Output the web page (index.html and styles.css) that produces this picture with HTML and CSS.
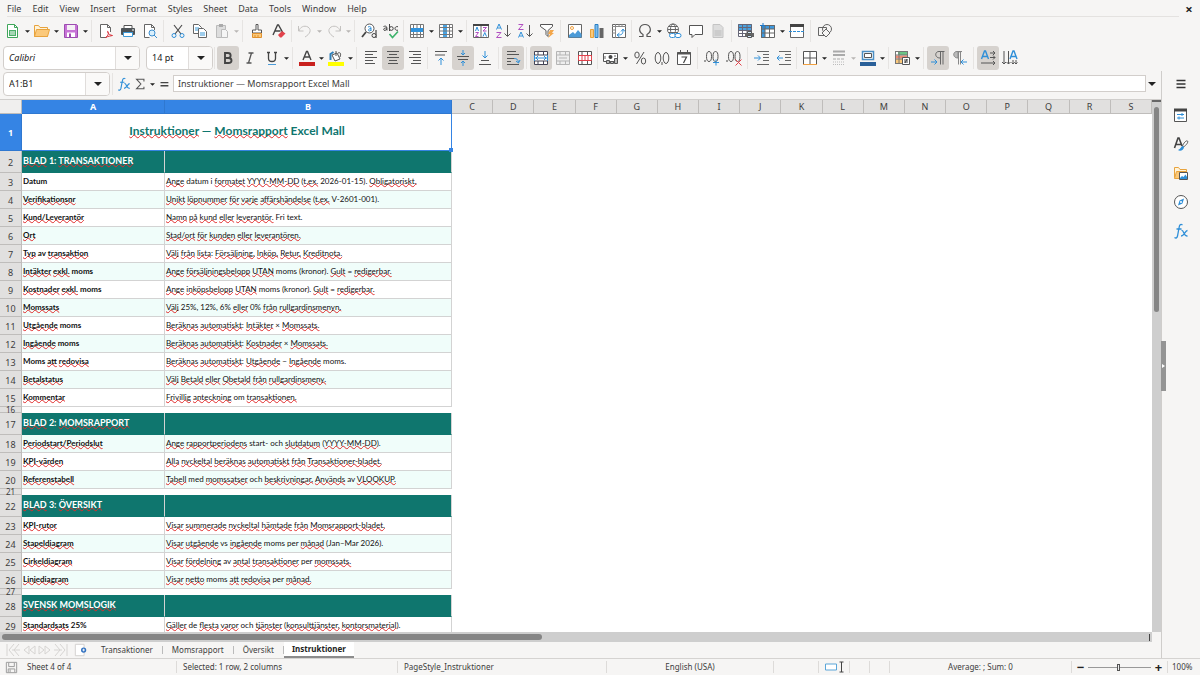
FILE: index.html
```html
<!DOCTYPE html>
<html lang="en">
<head>
<meta charset="utf-8">
<title>Momsrapport Excel Mall</title>
<link rel="stylesheet" href="styles.css">
</head>
<body>
<svg class="sprite" aria-hidden="true">
  <symbol id="new" viewBox="0 0 16 16"><path d="M2.500 1.500h7l3 3v10h-10z" fill="#fff" stroke="#3fa65a"/><path d="M9.500 1.500v3h3" fill="none" stroke="#3fa65a"/><path d="M4 7h7v6H4z" fill="#4caf6a"/><path d="M5 9h5M5 11h5" stroke="#fff"/></symbol>
  <symbol id="open" viewBox="0 0 16 16"><path d="M.5 13.500v-11h4l1.500 2h7.500v9z" fill="#fff3d8" stroke="#e8a33d"/><path d="M.5 13.500l2-7h13l-2 7z" fill="#fbc97b" stroke="#e8a33d"/></symbol>
  <symbol id="save" viewBox="0 0 16 16"><path d="M1.500 1.500h12l1 1v12h-13z" fill="#c773d6" stroke="#9c4bb0"/><path d="M4 2h8v5H4z" fill="#f4f0f5"/><path d="M4 9.500h8V14H4z" fill="#fff"/><path d="M6 10.500h2V14H6z" fill="#9c4bb0"/></symbol>
  <symbol id="pdf" viewBox="0 0 16 16"><path d="M12.500 9V4.500l-3-3h-7v13h6" fill="#fff" stroke="#666"/><path d="M9.500 1.500v3h3" fill="none" stroke="#666"/><path d="M7.500 14.500c3-2 3.500-5 2.500-6s-1 3 4.500 4c-2 .5-4 .5-7 2" fill="none" stroke="#d9303a"/></symbol>
  <symbol id="print" viewBox="0 0 16 16"><path d="M4 5V2.500h8V5" fill="#fff" stroke="#555"/><rect x="1" y="5" width="14" height="7" rx="1" fill="#4d5357"/><path d="M3.500 9.500h9v4h-9z" fill="#fff" stroke="#3d9ad8"/><path d="M12 7h2" stroke="#fff"/></symbol>
  <symbol id="preview" viewBox="0 0 16 16"><path d="M12.500 7V4.500l-3-3h-7v13h5" fill="#fff" stroke="#666"/><path d="M9.500 1.500v3h3" fill="none" stroke="#666"/><circle cx="10" cy="10" r="3" fill="#d9effc" stroke="#3d8fcf"/><path d="M12 12l3 3" stroke="#3d8fcf"/></symbol>
  <symbol id="cut" viewBox="0 0 16 16"><path d="M4 2l7 9M12 2l-7 9" stroke="#4d4d4d" stroke-width="1.200"/><circle cx="4" cy="12.500" r="2" fill="none" stroke="#2f8fd8"/><circle cx="12" cy="12.500" r="2" fill="none" stroke="#2f8fd8"/></symbol>
  <symbol id="copy" viewBox="0 0 16 16"><path d="M1.500 1.500h5l3 3v6h-8z" fill="#fff" stroke="#666"/><path d="M6.500 5.500h5l3 3v6h-8z" fill="#fff" stroke="#666"/><path d="M3 5h4M3 7h3M8 10h5M8 12h5" stroke="#3d9ad8"/></symbol>
  <symbol id="paste" viewBox="0 0 16 16"><path d="M2.500 2.500h9v12h-9z" fill="#ddd" stroke="#bbb"/><path d="M5 1h4v3H5z" fill="#aaa"/><path d="M7.500 6.500h4l2 2v6h-6z" fill="#f5f5f5" stroke="#bbb"/></symbol>
  <symbol id="clone" viewBox="0 0 16 16"><path d="M7 1.500h2V7h3.500v3h-9V7H7z" fill="#fff" stroke="#555"/><path d="M3.500 10.500h9v4h-9z" fill="#fbc97b" stroke="#e0912e"/><path d="M6 12v2M9 12v2" stroke="#e0912e"/></symbol>
  <symbol id="clear" viewBox="0 0 16 16"><path d="M2 12L6.500 2h1L12 10M3.500 8h6" fill="none" stroke="#444" stroke-width="1.400"/><path d="M7 12l4-4 3.500 2.500-4 4H9z" fill="#e2434c"/></symbol>
  <symbol id="undo" viewBox="0 0 16 16"><path d="M1.500 3v5h5M2 8c1-4 5-6 9-4 4 3 2 7-3 10" fill="none" stroke="#c4c2c0"/></symbol>
  <symbol id="redo" viewBox="0 0 16 16"><path d="M14.500 3v5h-5M14 8c-1-4-5-6-9-4-4 3-2 7 3 10" fill="none" stroke="#c4c2c0"/></symbol>
  <symbol id="find" viewBox="0 0 16 16"><circle cx="8.500" cy="5.500" r="4.500" fill="#fff" stroke="#555"/><path d="M5 9l-4 5" stroke="#444" stroke-width="1.800"/><path d="M7 4c2-1 3 0 3 1v3M10 5.500c-3 0-3 2.500-1.500 2.500L10 7" fill="none" stroke="#2f8fd8"/><path d="M15 7v8" stroke="#444" stroke-width="1.200"/><circle cx="13" cy="12.500" r="2" fill="#f6f5f4" stroke="#444"/></symbol>
  <symbol id="spell" viewBox="0 0 16 16"><path d="M.5 3.500c3-1 3.500 0 3.500 4M4 5C0 4.500 0 7.500 2 7.500L4 6M6.500 1v7" fill="none" stroke="#444"/><circle cx="8.300" cy="5.500" r="1.900" fill="none" stroke="#444"/><path d="M15 3.700c-4-1-4 4.500 0 3.500" fill="none" stroke="#444"/><path d="M6.500 11l3 3.500L15 8.500" fill="none" stroke="#3db36b" stroke-width="1.600"/></symbol>
  <symbol id="rows" viewBox="0 0 16 16"><path d="M1.500 1.500h13v13h-13z" fill="#fff"/><path d="M1 5h14v4H1z" fill="#2f93dd"/><path d="M1.500 1.500h13v13h-13zM4.500 1v4M8 1v4M11.500 1v4M4.500 9v6M8 9v6M11.500 9v6M1 11.500h14" fill="none" stroke="#777"/></symbol>
  <symbol id="cols" viewBox="0 0 16 16"><path d="M1.500 1.500h13v13h-13z" fill="#fff"/><path d="M5 1h4v14H5z" fill="#4ba3e0"/><path d="M1.500 1.500h13v13h-13zM11.500 1v14M1 4.500h14M1 8h14M1 11.500h14" fill="none" stroke="#777"/></symbol>
  <symbol id="sort" viewBox="0 0 16 16"><path d="M.5 1.500h15v13H.5zM8 3v12" fill="#fff" stroke="#666"/><path d="M0 2h16" stroke="#444" stroke-width="2"/><path d="M2.500 8l1.500-4 1.500 4M10 13.500l1.800-4 1.700 4" fill="none" stroke="#2f8fd8"/><path d="M2.500 9.500h3l-3 4h3M10 4.500h3.500l-3.500 3.500h3.500" fill="none" stroke="#b04fc0"/></symbol>
  <symbol id="asc" viewBox="0 0 16 16"><path d="M1.500 6.500L4 1l2.500 5.500M2.500 5h3" fill="none" stroke="#2f8fd8"/><path d="M1.500 9.500h4.500l-4.500 5h5" fill="none" stroke="#b04fc0"/><path d="M12.500 2v11M9.500 10.500l3 3 3-3" fill="none" stroke="#555"/></symbol>
  <symbol id="desc" viewBox="0 0 16 16"><path d="M1.500 14.500L4 9l2.500 5.500M2.500 13h3" fill="none" stroke="#2f8fd8"/><path d="M1.500 1.500h4.500l-4.500 5h5" fill="none" stroke="#b04fc0"/><path d="M12.500 2v11M9.500 10.500l3 3 3-3" fill="none" stroke="#555"/></symbol>
  <symbol id="filter" viewBox="0 0 16 16"><path d="M1.500 1.500h12v2l-4.500 4v6l-2-2v-4l-5.500-4z" fill="#fff" stroke="#555"/><path d="M11 7h4l-2 3h2l-6 5 2-4H9z" fill="#f3a64a"/></symbol>
  <symbol id="image" viewBox="0 0 16 16"><path d="M1.500 1.500h13v13h-13z" fill="#fff" stroke="#666"/><circle cx="5" cy="5" r="1.500" fill="#fff" stroke="#f0a040"/><path d="M2 12l4-3 2 2 3-4 3.500 4v3.500H2z" fill="#4b9bd8"/></symbol>
  <symbol id="chart" viewBox="0 0 16 16"><path d="M1.500 6.500h3v8h-3z" fill="#fbc97b" stroke="#e8a33d"/><path d="M6 1.500h3v13H6z" fill="#7bbcec" stroke="#2b7fc4"/><path d="M10.500 5h4v10h-4z" fill="#666"/></symbol>
  <symbol id="pivot" viewBox="0 0 16 16"><path d="M1.500 1.500h13v13h-13z" fill="#fff" stroke="#666"/><path d="M1 3.500h14M4.500 1v14M8 1v3M11 1v3M1 7h4M1 10h4" stroke="#888"/><path d="M7 12c4 0 5-1 5-5M10 8.500L12 6l2 2.500M8.500 10L6 12l2.500 2" fill="none" stroke="#2f8fd8"/></symbol>
  <symbol id="omega" viewBox="0 0 16 16"><path d="M2 13.500h4v-2C0 8 3 1.500 8 1.500S16 8 10 11.500v2h4" fill="none" stroke="#555" stroke-width="1.200"/></symbol>
  <symbol id="link" viewBox="0 0 16 16"><circle cx="7" cy="6.500" r="5.500" fill="#fff" stroke="#666"/><ellipse cx="7" cy="6.500" rx="2.500" ry="5.500" fill="none" stroke="#666"/><path d="M1.500 6.500h11M2.500 3.500h9M2.500 9.500h9" stroke="#666"/><rect x="3.500" y="10.500" width="6" height="4" rx="2" fill="#fff" stroke="#2f8fd8"/><rect x="9" y="10.500" width="6" height="4" rx="2" fill="#fff" stroke="#2f8fd8"/></symbol>
  <symbol id="comment" viewBox="0 0 16 16"><path d="M1.500 2.500h13v9H7l-3 3v-3H1.500z" fill="#fff" stroke="#555"/></symbol>
  <symbol id="headers" viewBox="0 0 16 16"><path d="M3 1.500h7l3 3v10H3z" fill="#ddd" stroke="#c4c4c4"/><path d="M4.500 8h7M4.500 10h7M4.500 12h7" stroke="#bbb"/></symbol>
  <symbol id="printarea" viewBox="0 0 16 16"><path d="M.5 1.500h13v12H.5z" fill="#fff"/><path d="M0 1h14v7H0z" fill="#4ba3e0"/><path d="M.5 1.500h13v12H.5zM4.500 1v13M9 1v13M0 4.500h14M0 7.500h14M0 10.500h14" fill="none" stroke="#667"/><path d="M7 10h9v4H7z" fill="#666"/><path d="M9.500 8.500h4v2h-4zM9.500 12.500h4v2h-4z" fill="#cfe8fa" stroke="#555"/></symbol>
  <symbol id="freeze" viewBox="0 0 16 16"><path d="M1 2h14v13H1z" fill="#fff"/><path d="M1 2h14v4H5v9H1z" fill="#3d98de"/><path d="M1.500 2.500h13v12h-13zM5 2v13M9.500 2v13M1 6h14M1 10h14" fill="none" stroke="#666"/><path d="M3 0v5M0 2.500h5" stroke="#1f78c8"/></symbol>
  <symbol id="split" viewBox="0 0 16 16"><path d="M1.500 2.500h13v12h-13z" fill="#fff" stroke="#666"/><path d="M1 2.500h14" stroke="#444" stroke-width="3"/><path d="M0 8.500h16" stroke="#2f8fd8" stroke-dasharray="3 1"/></symbol>
  <symbol id="shapes" viewBox="0 0 16 16"><path d="M1.500 4.500h8v8h-8z" fill="#f6f5f4" stroke="#666"/><circle cx="10" cy="6" r="4.500" fill="none" stroke="#666"/><path d="M9 6l4 4-4 4-4-4z" fill="#f6f5f4" stroke="#666"/></symbol>

  <symbol id="bold" viewBox="0 0 16 16"><path d="M5 3v10h3.500c4 0 4-5 0-5H5h3c3.500 0 3.500-5 0-5z" fill="none" stroke="#444" stroke-width="1.900"/></symbol>
  <symbol id="italic" viewBox="0 0 16 16"><path d="M6.500 3h5M4.500 13h5M9.500 3l-3 10" fill="none" stroke="#555" stroke-width="1.300"/></symbol>
  <symbol id="underline" viewBox="0 0 16 16"><path d="M3 2.500h3M10 2.500h3M4.500 2.500v6c0 4 7 4 7 0v-6" fill="none" stroke="#444" stroke-width="1.300"/><path d="M4 14.500h8" stroke="#4b9bd8"/></symbol>
  <symbol id="fontcolor" viewBox="0 0 16 16"><path d="M4 10L7.500 1.500h1L12 10M5.500 7h5" fill="none" stroke="#444" stroke-width="1.400"/><path d="M0 12h16v4H0z" fill="#c9211e"/></symbol>
  <symbol id="fill" viewBox="0 0 16 16"><path d="M4 5l5-2 3 6-5 2zM8 1v5" fill="#fff" stroke="#555"/><path d="M2.500 10V4l3-2" fill="none" stroke="#2f7fb8" stroke-width="2"/><path d="M10 3c3-1 3 1 2 4" fill="none" stroke="#555"/><path d="M0 12h16v4H0z" fill="#ff0"/></symbol>
  <symbol id="left" viewBox="0 0 16 16"><path d="M2 1.500h12M2 4.500h8M2 7.500h12M2 10.500h8M2 13.500h10" stroke="#555"/></symbol>
  <symbol id="center" viewBox="0 0 16 16"><path d="M2 1.500h12M4 4.500h8M2 7.500h12M4 10.500h8M3 13.500h10" stroke="#555"/></symbol>
  <symbol id="right" viewBox="0 0 16 16"><path d="M2 1.500h12M6 4.500h8M2 7.500h12M6 10.500h8M4 13.500h10" stroke="#555"/></symbol>
  <symbol id="top" viewBox="0 0 16 16"><path d="M2 1.500h12M2 5h10" stroke="#555"/><path d="M8 15V8M5.500 10.500L8 8l2.500 2.500" fill="none" stroke="#2f8fd8"/></symbol>
  <symbol id="middle" viewBox="0 0 16 16"><path d="M2 6.500h12M3 9.500h10" stroke="#555"/><path d="M8 0v5M6 3l2 2 2-2M8 16v-5M6 13l2-2 2 2" fill="none" stroke="#2f8fd8"/></symbol>
  <symbol id="bottom" viewBox="0 0 16 16"><path d="M4 10.500h8M2 14.500h12" stroke="#555"/><path d="M8 1v7M5.500 5.500L8 8l2.500-2.500" fill="none" stroke="#2f8fd8"/></symbol>
  <symbol id="wrap" viewBox="0 0 16 16"><path d="M2 1.500h9M2 4.500h12M2 8.500h7M2 11.500h4M2 14.500h12" stroke="#555"/><path d="M9 8.500c3 0 4 1 4.500 4M11 11l2.500 2 1.500-3" fill="none" stroke="#2f8fd8"/></symbol>
  <symbol id="merge" viewBox="0 0 16 16"><path d="M1.500 1.500h13v13h-13z" fill="#fff"/><path d="M1.500 1.500h13v13h-13zM5 1v4M10.500 1v4M5 11v4M10.500 11v4M1 5h14M1 11h14" fill="none" stroke="#445"/><path d="M1.500 5v6M14.500 5v6M2 8h12M5 6L3 8l2 2M11 6l2 2-2 2" fill="none" stroke="#2f8fd8"/></symbol>
  <symbol id="mergeoff" viewBox="0 0 16 16"><path d="M1.500 1.500h13v13h-13zM5 1v4M10.500 1v4M5 11v4M10.500 11v4M1 5h14M1 11h14M4 8h8" fill="#eee" stroke="#b5b5b5"/></symbol>
  <symbol id="unmerge" viewBox="0 0 16 16"><path d="M1.500 1.500h13v13h-13zM5 1v4M10.500 1v4M5 11v4M10.500 11v4" fill="#fff" stroke="#555"/><path d="M1.500 5.500h13v5h-13zM5 5v6M8 5v6M11 5v6" fill="none" stroke="#e2434c"/></symbol>
  <symbol id="currency" viewBox="0 0 16 16"><path d="M.5 3.500h14v8H.5z" fill="#fff" stroke="#555"/><circle cx="7.500" cy="7" r="2" fill="#444"/><path d="M2 6v3M12 5v2" stroke="#666"/><path d="M3.500 10.500h3v3h-3zM7.500 11.500h3v2h-3zM11.500 8.500h3v5h-3z" fill="#bbb" stroke="#555"/></symbol>
  <symbol id="percent" viewBox="0 0 16 16"><ellipse cx="5" cy="5" rx="2.200" ry="3" fill="none" stroke="#555"/><ellipse cx="11.500" cy="11" rx="2.200" ry="3" fill="none" stroke="#555"/><path d="M12 2L4.500 14" stroke="#555"/></symbol>
  <symbol id="number" viewBox="0 0 16 16"><ellipse cx="4" cy="8" rx="2.800" ry="5.500" fill="none" stroke="#555"/><ellipse cx="12" cy="8" rx="2.800" ry="5.500" fill="none" stroke="#555"/><path d="M8 12v3" stroke="#555"/></symbol>
  <symbol id="date" viewBox="0 0 16 16"><path d="M1.500 2.500h13v12h-13z" fill="#fff" stroke="#555"/><path d="M1 3.500h14" stroke="#555" stroke-width="2"/><path d="M4.500 0v4M11.500 0v4" stroke="#555"/><path d="M5.500 7h5l-3 6" fill="none" stroke="#444" stroke-width="1.200"/></symbol>
  <symbol id="adddec" viewBox="0 0 16 16"><ellipse cx="5" cy="6.500" rx="2.500" ry="5" fill="none" stroke="#555"/><ellipse cx="11.500" cy="6.500" rx="2.500" ry="5" fill="none" stroke="#555"/><path d="M1 10v2" stroke="#444"/><path d="M9 12.500h6M12 9.500v6" stroke="#2f8fd8"/></symbol>
  <symbol id="deldec" viewBox="0 0 16 16"><ellipse cx="5" cy="6.500" rx="2.500" ry="5" fill="none" stroke="#555"/><ellipse cx="11.500" cy="6.500" rx="2.500" ry="5" fill="none" stroke="#555"/><path d="M1 10v2" stroke="#444"/><path d="M9.500 9.500l6 6M15.500 9.500l-6 6" stroke="#e2434c"/></symbol>
  <symbol id="indent" viewBox="0 0 16 16"><path d="M3 1.500h12M9 4.500h6M9 7.500h6M9 10.500h6M3 14.500h12" stroke="#666"/><path d="M0 8h6M4 5.500L6.500 8 4 10.500" fill="none" stroke="#2f8fd8"/></symbol>
  <symbol id="outdent" viewBox="0 0 16 16"><path d="M3 1.500h12M9 4.500h6M9 7.500h6M9 10.500h6M3 14.500h12" stroke="#666"/><path d="M1 8h6M3.500 5.500L1 8l2.500 2.500" fill="none" stroke="#2f8fd8"/></symbol>
  <symbol id="border" viewBox="0 0 16 16"><path d="M1.500 1.500h13v13h-13zM8 1v13M1 8h14" fill="#fff" stroke="#555"/><path d="M1 14.500h14" stroke="#f0a040"/></symbol>
  <symbol id="linestyle" viewBox="0 0 16 16"><path d="M2 1.500h12M2 5h12" stroke="#aaa" stroke-width="2"/><path d="M2 9h12" stroke="#aaa" stroke-dasharray="3 1"/><path d="M2 12h12M2 14.500h12" stroke="#bbb" stroke-dasharray="1 1"/></symbol>
  <symbol id="linecolor" viewBox="0 0 16 16"><path d="M2.500 1.500h11v8h-11z" fill="#fff" stroke="#4b8fc4" stroke-width="1.500"/><path d="M4.500 3.500h7v4h-7z" fill="#fff" stroke="#555"/><path d="M0 12h16v4H0z" fill="#2a6099"/></symbol>
  <symbol id="cond" viewBox="0 0 16 16"><path d="M.5 1.500h12v12H.5z" fill="#fff" stroke="#555"/><path d="M3 2h9v3H3z" fill="#6cc486"/><path d="M1 5.500h11v3H1z" fill="#f08b74"/><path d="M1 9h7v4H1z" fill="#fbc97b"/><path d="M.5 1.500h12v12H.5zM4 1v13M0 5h13M0 9h13" fill="none" stroke="#777"/><path d="M7.500 7.500h7v7h-7z" fill="#fff" stroke="#555"/><path d="M9 10h4M9 12h4M12 9l-2 4" stroke="#444"/></symbol>
  <symbol id="ltr" viewBox="0 0 16 16"><path d="M14.500 1.500H9c-4.500 0-4.500 6.500 1 6.500M10.500 1.500v13M13 1.500v13" fill="none" stroke="#666"/><path d="M1 12h6M4.500 9.500L7 12l-2.500 2.500" fill="none" stroke="#2f8fd8"/></symbol>
  <symbol id="rtl" viewBox="0 0 16 16"><path d="M10 1.500H5C.5 1.500.5 8 6 8V2zM6.500 1.500v13M8.500 1.500v13" fill="#bbb" stroke="#888"/><path d="M9 12h6M11.500 9.500L9 12l2.500 2.500" fill="none" stroke="#2f8fd8"/></symbol>
  <symbol id="txth" viewBox="0 0 16 16"><path d="M1.500 9L4.500 1h1l3 8M2.500 6.500h5" fill="none" stroke="#2f8fd8" stroke-width="1.400"/><path d="M10 3h5M10 7.500h5M1 13h14M13 1l2 2-2 2M13 5.500l2 2-2 2M13 11l2 2-2 2" fill="none" stroke="#555"/></symbol>
  <symbol id="txtv" viewBox="0 0 16 16"><path d="M8 9l3-8h1l3 8M9 6.500h5" fill="none" stroke="#2f8fd8" stroke-width="1.400"/><path d="M2 1v13M6.500 1v13M0 12l2 2 2-2M4.500 12l2 2 2-2M11 10v4M14 10v4M9.500 12.500l1.500 1.500 1.500-1.500 1.500 1.500 1.500-1.500" fill="none" stroke="#555"/></symbol>

  <symbol id="fx" viewBox="0 0 16 16"><path d="M9.500 2C7.500.5 6.500 2 6 5l-1.500 8c-.5 2-1.500 2.500-3 1.500M3.500 6h5" fill="none" stroke="#2f8fd8" stroke-width="1.300"/><path d="M8.500 7.500c2.500-1 2 6 6 5.500M14.500 7.500c-2.500 0-3 5.500-6.500 5.500" fill="none" stroke="#2f8fd8" stroke-width="1.300"/></symbol>
  <symbol id="sigma" viewBox="0 0 16 16"><path d="M12.500 5V2.500H4L9 8l-5 5.500h8.500V11" fill="none" stroke="#555" stroke-width="1.200"/></symbol>
  <symbol id="equal" viewBox="0 0 16 16"><path d="M4 6.500h9M4 10h9" stroke="#444" stroke-width="1.500"/></symbol>
  <symbol id="menu" viewBox="0 0 16 16"><path d="M3.500 4.500h9M3.500 8h9M3.500 11.500h9" stroke="#333" stroke-width="1.400"/></symbol>
  <symbol id="props" viewBox="0 0 16 16"><path d="M1.500 2.500h12v12h-12z" fill="#fff" stroke="#555"/><path d="M1 3h13" stroke="#444" stroke-width="3"/><path d="M4 7.500h7M4 11h7" stroke="#2f8fd8"/><path d="M9 6v3M6 9.500v3" stroke="#2f8fd8"/></symbol>
  <symbol id="styles" viewBox="0 0 16 16"><path d="M1.500 12L5 2h1l3 8M3 8.500h5" fill="none" stroke="#444" stroke-width="1.600"/><path d="M14.500 5c1 1-1 4-4 6l-1-1c1-3 4-6 5-5z" fill="#fff" stroke="#555"/><path d="M10 10c-2 0-2 3-5 4 2 2 6 0 6-3z" fill="#2f8fd8"/></symbol>
  <symbol id="gallery" viewBox="0 0 16 16"><path d="M1.500 12.500v-10h4l1.500 2h6.500v8z" fill="#fff3d8" stroke="#e8a33d"/><path d="M1.500 13.500l2-7h10v7z" fill="#fbc97b" stroke="#e8a33d"/><path d="M6.500 7.500h8v7h-8z" fill="#fff" stroke="#555"/><path d="M7 13l2-2 1.500 1 2-2.500L14 12v2H7z" fill="#2f8fd8"/></symbol>
  <symbol id="navigator" viewBox="0 0 16 16"><circle cx="8" cy="8" r="6.500" fill="#fff" stroke="#555"/><path d="M11 4.500L9.500 9.500 5 11.500 6.500 6.500z" fill="#2f8fd8"/><circle cx="8" cy="8" r="1" fill="#fff"/></symbol>
  <symbol id="first" viewBox="0 0 16 16"><path d="M2 2v12M14 2l-5 6 5 6M9 2L4 8l5 6M7 8h8" fill="none" stroke="#d6d4d2"/></symbol>
  <symbol id="prev" viewBox="0 0 16 16"><path d="M8 4L3 8l5 4zM14 4L9 8l5 4z" fill="none" stroke="#d6d4d2"/></symbol>
  <symbol id="addsheet" viewBox="0 0 16 16"><path d="M1.500 1.500h10v13h-10z" fill="#fff" stroke="#d0cecc"/><circle cx="11" cy="8" r="3" fill="#3271c0"/><path d="M9.500 8h3M11 6.500v3" stroke="#fff"/></symbol>
  <symbol id="disk" viewBox="0 0 16 16"><path d="M2.500 2.500h11v11h-11zM5 3v4h6V3M4.500 13V9.500h7V13M6.500 10v3" fill="none" stroke="#999"/></symbol>
  <symbol id="mode" viewBox="0 0 20 12"><path d="M.5 3h11v6H.5z" fill="#fff" stroke="#5aa5d8"/><path d="M14.500 1h4M14.500 11h4M16.500 1v10" stroke="#444"/></symbol>
  <symbol id="arrow" viewBox="0 0 8 4"><path d="M0 0h8L4 4z" fill="currentColor"/></symbol>
</svg>

<header class="menubar">
  <nav class="menus" aria-label="Main menu">
    <button>File</button><button>Edit</button><button>View</button><button>Insert</button><button>Format</button><button>Styles</button><button>Sheet</button><button>Data</button><button>Tools</button><button>Window</button><button>Help</button>
  </nav>
  <button class="close" aria-label="Close document">×</button>
</header>

<div class="toolbar" role="toolbar" aria-label="Standard">
  <button class="tool" aria-label="New"><svg><use href="#new"/></svg></button><button class="drop" aria-label="New options"><svg><use href="#arrow"/></svg></button>
  <button class="tool" aria-label="Open"><svg><use href="#open"/></svg></button><button class="drop" aria-label="Open options"><svg><use href="#arrow"/></svg></button>
  <button class="tool" aria-label="Save"><svg><use href="#save"/></svg></button><button class="drop" aria-label="Save options"><svg><use href="#arrow"/></svg></button>
  <span class="sep"></span>
  <button class="tool" aria-label="Export as PDF"><svg><use href="#pdf"/></svg></button>
  <button class="tool" aria-label="Print"><svg><use href="#print"/></svg></button>
  <button class="tool" aria-label="Print preview"><svg><use href="#preview"/></svg></button>
  <span class="sep"></span>
  <button class="tool" aria-label="Cut"><svg><use href="#cut"/></svg></button>
  <button class="tool" aria-label="Copy"><svg><use href="#copy"/></svg></button>
  <button class="tool" aria-label="Paste" disabled><svg><use href="#paste"/></svg></button><button class="drop" aria-label="Paste options" disabled><svg><use href="#arrow"/></svg></button>
  <span class="sep"></span>
  <button class="tool" aria-label="Clone formatting"><svg><use href="#clone"/></svg></button>
  <button class="tool" aria-label="Clear formatting"><svg><use href="#clear"/></svg></button>
  <span class="sep tight"></span>
  <button class="tool" aria-label="Undo" disabled><svg><use href="#undo"/></svg></button><button class="drop" aria-label="Undo options" disabled><svg><use href="#arrow"/></svg></button>
  <button class="tool" aria-label="Redo" disabled><svg><use href="#redo"/></svg></button><button class="drop" aria-label="Redo options" disabled><svg><use href="#arrow"/></svg></button>
  <span class="sep"></span>
  <button class="tool" aria-label="Find and replace"><svg><use href="#find"/></svg></button>
  <button class="tool" aria-label="Spelling"><svg><use href="#spell"/></svg></button>
  <span class="sep tight"></span>
  <button class="tool" aria-label="Row"><svg><use href="#rows"/></svg></button><button class="drop" aria-label="Row options"><svg><use href="#arrow"/></svg></button>
  <button class="tool" aria-label="Column"><svg><use href="#cols"/></svg></button><button class="drop" aria-label="Column options"><svg><use href="#arrow"/></svg></button>
  <span class="sep"></span>
  <button class="tool" aria-label="Sort"><svg><use href="#sort"/></svg></button>
  <button class="tool" aria-label="Sort ascending"><svg><use href="#asc"/></svg></button>
  <button class="tool" aria-label="Sort descending"><svg><use href="#desc"/></svg></button>
  <button class="tool" aria-label="AutoFilter"><svg><use href="#filter"/></svg></button>
  <span class="sep"></span>
  <button class="tool" aria-label="Insert image"><svg><use href="#image"/></svg></button>
  <button class="tool" aria-label="Insert chart"><svg><use href="#chart"/></svg></button>
  <button class="tool" aria-label="Pivot table"><svg><use href="#pivot"/></svg></button>
  <span class="sep tight"></span>
  <button class="tool" aria-label="Special character"><svg><use href="#omega"/></svg></button><button class="drop" aria-label="Special character options"><svg><use href="#arrow"/></svg></button>
  <button class="tool" aria-label="Hyperlink"><svg><use href="#link"/></svg></button>
  <button class="tool" aria-label="Comment"><svg><use href="#comment"/></svg></button>
  <button class="tool" aria-label="Headers and footers" disabled><svg><use href="#headers"/></svg></button>
  <span class="sep"></span>
  <button class="tool" aria-label="Print area"><svg><use href="#printarea"/></svg></button>
  <button class="tool" aria-label="Freeze panes"><svg><use href="#freeze"/></svg></button><button class="drop" aria-label="Freeze options"><svg><use href="#arrow"/></svg></button>
  <button class="tool" aria-label="Split window"><svg><use href="#split"/></svg></button>
  <span class="sep"></span>
  <button class="tool" aria-label="Draw functions"><svg><use href="#shapes"/></svg></button>
</div>

<div class="toolbar formatting" role="toolbar" aria-label="Formatting">
  <div class="combo font-name"><input type="text" value="Calibri" aria-label="Font name"><button aria-label="Font list"><svg><use href="#arrow"/></svg></button></div>
  <div class="combo font-size"><input type="text" value="14 pt" aria-label="Font size"><button aria-label="Size list"><svg><use href="#arrow"/></svg></button></div>
  <span class="sep tight"></span>
  <button class="tool on" aria-label="Bold"><svg><use href="#bold"/></svg></button>
  <button class="tool" aria-label="Italic"><svg><use href="#italic"/></svg></button>
  <button class="tool" aria-label="Underline"><svg><use href="#underline"/></svg></button><button class="drop" aria-label="Underline options"><svg><use href="#arrow"/></svg></button>
  <span class="sep"></span>
  <button class="tool" aria-label="Font color"><svg><use href="#fontcolor"/></svg></button><button class="drop" aria-label="Font color options"><svg><use href="#arrow"/></svg></button>
  <button class="tool" aria-label="Background color"><svg><use href="#fill"/></svg></button><button class="drop" aria-label="Background options"><svg><use href="#arrow"/></svg></button>
  <span class="sep"></span>
  <button class="tool" aria-label="Align left"><svg><use href="#left"/></svg></button>
  <button class="tool on" aria-label="Align center"><svg><use href="#center"/></svg></button>
  <button class="tool" aria-label="Align right"><svg><use href="#right"/></svg></button>
  <span class="sep tight"></span>
  <button class="tool" aria-label="Align top"><svg><use href="#top"/></svg></button>
  <button class="tool on" aria-label="Center vertically"><svg><use href="#middle"/></svg></button>
  <button class="tool" aria-label="Align bottom"><svg><use href="#bottom"/></svg></button>
  <span class="sep"></span>
  <button class="tool on" aria-label="Wrap text"><svg><use href="#wrap"/></svg></button>
  <span class="sep"></span>
  <button class="tool on" aria-label="Merge and center"><svg><use href="#merge"/></svg></button>
  <button class="tool" aria-label="Merge cells" disabled><svg><use href="#mergeoff"/></svg></button>
  <button class="tool" aria-label="Unmerge cells"><svg><use href="#unmerge"/></svg></button>
  <span class="sep tight"></span>
  <button class="tool" aria-label="Currency"><svg><use href="#currency"/></svg></button><button class="drop" aria-label="Currency options"><svg><use href="#arrow"/></svg></button>
  <button class="tool" aria-label="Percent"><svg><use href="#percent"/></svg></button>
  <button class="tool" aria-label="Number"><svg><use href="#number"/></svg></button>
  <button class="tool" aria-label="Date"><svg><use href="#date"/></svg></button>
  <span class="sep"></span>
  <button class="tool" aria-label="Add decimal place"><svg><use href="#adddec"/></svg></button>
  <button class="tool" aria-label="Delete decimal place"><svg><use href="#deldec"/></svg></button>
  <span class="sep"></span>
  <button class="tool" aria-label="Increase indent"><svg><use href="#indent"/></svg></button>
  <button class="tool" aria-label="Decrease indent"><svg><use href="#outdent"/></svg></button>
  <span class="sep tight"></span>
  <button class="tool" aria-label="Borders"><svg><use href="#border"/></svg></button><button class="drop" aria-label="Border options"><svg><use href="#arrow"/></svg></button>
  <button class="tool" aria-label="Border style" disabled><svg><use href="#linestyle"/></svg></button><button class="drop" aria-label="Border style options" disabled><svg><use href="#arrow"/></svg></button>
  <button class="tool" aria-label="Border color"><svg><use href="#linecolor"/></svg></button><button class="drop" aria-label="Border color options"><svg><use href="#arrow"/></svg></button>
  <span class="sep"></span>
  <button class="tool" aria-label="Conditional formatting"><svg><use href="#cond"/></svg></button><button class="drop" aria-label="Conditional options"><svg><use href="#arrow"/></svg></button>
  <span class="sep"></span>
  <button class="tool on" aria-label="Left to right"><svg><use href="#ltr"/></svg></button>
  <button class="tool" aria-label="Right to left"><svg><use href="#rtl"/></svg></button>
  <span class="sep"></span>
  <button class="tool on" aria-label="Horizontal text"><svg><use href="#txth"/></svg></button>
  <button class="tool" aria-label="Vertical text"><svg><use href="#txtv"/></svg></button>
</div>

<div class="workspace">
  <main class="document">
    <div class="formula">
      <div class="combo name-box"><input type="text" value="A1:B1" aria-label="Name box"><button aria-label="Name list"><svg><use href="#arrow"/></svg></button></div>
      <span class="sep"></span>
      <button class="mini" aria-label="Function wizard"><svg><use href="#fx"/></svg></button>
      <button class="mini" aria-label="Select function"><svg><use href="#sigma"/></svg></button><button class="drop" aria-label="Function options"><svg><use href="#arrow"/></svg></button>
      <button class="mini" aria-label="Formula"><svg><use href="#equal"/></svg></button>
      <input class="input-line" type="text" value="Instruktioner — Momsrapport Excel Mall" aria-label="Input line">
      <button class="expand" aria-label="Expand formula bar"><svg><use href="#arrow"/></svg></button>
    </div>

    <div class="view">
      <div class="grid">
        <table class="sheet">
          <colgroup><col class="c-num"><col class="c-a"><col class="c-b"><col span="17"></colgroup>
          <thead>
            <tr><th class="corner"></th><th class="sel">A</th><th class="sel">B</th><th>C</th><th>D</th><th>E</th><th>F</th><th>G</th><th>H</th><th>I</th><th>J</th><th>K</th><th>L</th><th>M</th><th>N</th><th>O</th><th>P</th><th>Q</th><th>R</th><th>S</th></tr>
          </thead>
          <tbody>
            <tr class="title"><th class="sel">1</th><td colspan="2"><u>Instruktioner</u> — <u>Momsrapport</u> Excel Mall<span class="handle"></span></td></tr>
            <tr class="section"><th>2</th><td><u>BLAD</u> 1: <u>TRANSAKTIONER</u></td><td></td></tr>
            <tr><th>3</th><td>Datum</td><td><u>Ange</u> datum i <u>formatet</u> <u>YYYY-MM-DD</u> (<u>t.ex.</u> 2026-01-15). <u>Obligatoriskt.</u></td></tr>
            <tr class="alt"><th>4</th><td><u>Verifikationsnr</u></td><td><u>Unikt</u> <u>löpnummer</u> <u>för</u> <u>varje</u> <u>affärshändelse</u> (<u>t.ex.</u> V-2601-001).</td></tr>
            <tr><th>5</th><td><u>Kund/Leverantör</u></td><td><u>Namn</u> <u>på</u> <u>kund</u> <u>eller</u> <u>leverantör.</u> Fri text.</td></tr>
            <tr class="alt"><th>6</th><td><u>Ort</u></td><td><u>Stad/ort</u> <u>för</u> <u>kunden</u> <u>eller</u> <u>leverantören.</u></td></tr>
            <tr><th>7</th><td><u>Typ</u> av <u>transaktion</u></td><td><u>Välj</u> <u>från</u> <u>lista</u>: <u>Försäljning,</u> <u>Inköp,</u> <u>Retur,</u> <u>Kreditnota.</u></td></tr>
            <tr class="alt"><th>8</th><td><u>Intäkter</u> <u>exkl.</u> moms</td><td><u>Ange</u> <u>försäljningsbelopp</u> <u>UTAN</u> moms (kronor). <u>Gult</u> = <u>redigerbar.</u></td></tr>
            <tr><th>9</th><td><u>Kostnader</u> <u>exkl.</u> moms</td><td><u>Ange</u> <u>inköpsbelopp</u> <u>UTAN</u> moms (kronor). <u>Gult</u> = <u>redigerbar.</u></td></tr>
            <tr class="alt"><th>10</th><td><u>Momssats</u></td><td><u>Välj</u> 25%, 12%, 6% <u>eller</u> 0% <u>från</u> <u>rullgardinsmenyn.</u></td></tr>
            <tr><th>11</th><td><u>Utgående</u> moms</td><td><u>Beräknas</u> <u>automatiskt</u>: <u>Intäkter</u> × <u>Momssats.</u></td></tr>
            <tr class="alt"><th>12</th><td><u>Ingående</u> moms</td><td><u>Beräknas</u> <u>automatiskt</u>: <u>Kostnader</u> × <u>Momssats.</u></td></tr>
            <tr><th>13</th><td>Moms <u>att</u> <u>redovisa</u></td><td><u>Beräknas</u> <u>automatiskt</u>: <u>Utgående</u> − <u>Ingående</u> moms.</td></tr>
            <tr class="alt"><th>14</th><td><u>Betalstatus</u></td><td><u>Välj</u> <u>Betald</u> <u>eller</u> <u>Obetald</u> <u>från</u> <u>rullgardinsmeny.</u></td></tr>
            <tr><th>15</th><td><u>Kommentar</u></td><td><u>Frivillig</u> <u>anteckning</u> om <u>transaktionen.</u></td></tr>
            <tr class="gap"><th>16</th><td></td><td></td></tr>
            <tr class="section"><th>17</th><td><u>BLAD</u> 2: <u>MOMSRAPPORT</u></td><td></td></tr>
            <tr class="alt"><th>18</th><td><u>Periodstart/Periodslut</u></td><td><u>Ange</u> <u>rapportperiodens</u> start- och <u>slutdatum</u> (<u>YYYY-MM-DD</u>).</td></tr>
            <tr><th>19</th><td><u>KPI-värden</u></td><td><u>Alla</u> <u>nyckeltal</u> <u>beräknas</u> <u>automatiskt</u> <u>från</u> <u>Transaktioner-bladet.</u></td></tr>
            <tr class="alt"><th>20</th><td><u>Referenstabell</u></td><td><u>Tabell</u> med <u>momssatser</u> och <u>beskrivningar.</u> <u>Används</u> av <u>VLOOKUP.</u></td></tr>
            <tr class="gap"><th>21</th><td></td><td></td></tr>
            <tr class="section"><th>22</th><td><u>BLAD</u> 3: <u>ÖVERSIKT</u></td><td></td></tr>
            <tr><th>23</th><td><u>KPI-rutor</u></td><td><u>Visar</u> <u>summerade</u> <u>nyckeltal</u> <u>hämtade</u> <u>från</u> <u>Momsrapport-bladet.</u></td></tr>
            <tr class="alt"><th>24</th><td><u>Stapeldiagram</u></td><td><u>Visar</u> <u>utgående</u> vs <u>ingående</u> moms per <u>månad</u> (Jan–Mar 2026).</td></tr>
            <tr><th>25</th><td><u>Cirkeldiagram</u></td><td><u>Visar</u> <u>fördelning</u> av <u>antal</u> <u>transaktioner</u> per <u>momssats.</u></td></tr>
            <tr class="alt"><th>26</th><td><u>Linjediagram</u></td><td><u>Visar</u> <u>netto</u> moms <u>att</u> <u>redovisa</u> per <u>månad.</u></td></tr>
            <tr class="gap"><th>27</th><td></td><td></td></tr>
            <tr class="section"><th>28</th><td><u>SVENSK</u> <u>MOMSLOGIK</u></td><td></td></tr>
            <tr><th>29</th><td><u>Standardsats</u> 25%</td><td><u>Gäller</u> de <u>flesta</u> <u>varor</u> och <u>tjänster</u> (<u>konsulttjänster,</u> <u>kontorsmaterial</u>).</td></tr>
          </tbody>
        </table>
      </div>
      <div class="vscroll"><div class="thumb"></div></div>
    </div>

    <div class="hscroll"><div class="thumb"></div><div class="splitter"></div></div>

    <div class="tabs">
      <div class="tab-nav">
        <button aria-label="First sheet"><svg><use href="#first"/></svg></button><button aria-label="Previous sheet"><svg><use href="#prev"/></svg></button><button class="flip" aria-label="Next sheet"><svg><use href="#prev"/></svg></button><button class="flip" aria-label="Last sheet"><svg><use href="#first"/></svg></button>
      </div>
      <button class="add" aria-label="Add sheet"><svg><use href="#addsheet"/></svg></button>
      <button class="tab">Transaktioner</button><button class="tab">Momsrapport</button><button class="tab">Översikt</button><button class="tab active">Instruktioner</button>
    </div>
  </main>

  <aside class="sidebar">
    <button aria-label="Sidebar settings"><svg><use href="#menu"/></svg></button>
    <button aria-label="Properties"><svg><use href="#props"/></svg></button>
    <button aria-label="Styles"><svg><use href="#styles"/></svg></button>
    <button aria-label="Gallery"><svg><use href="#gallery"/></svg></button>
    <button aria-label="Navigator"><svg><use href="#navigator"/></svg></button>
    <button aria-label="Functions"><svg><use href="#fx"/></svg></button>
    <div class="grip"></div>
  </aside>
</div>

<footer class="status">
  <div class="sheet-no"><svg><use href="#disk"/></svg><span>Sheet 4 of 4</span></div>
  <div>Selected: 1 row, 2 columns</div>
  <div>PageStyle_Instruktioner</div>
  <div class="mid">English (USA)</div>
  <div></div>
  <div class="mode"><svg><use href="#mode"/></svg></div>
  <div></div>
  <div></div>
  <div class="mid">Average: ; Sum: 0</div>
  <div class="zoom"><button aria-label="Zoom out">−</button><input type="range" min="0" max="100" value="48" aria-label="Zoom"><button aria-label="Zoom in">+</button></div>
  <div class="percent">100%</div>
</footer>
</body>
</html>
```
FILE: styles.css
```css
* { box-sizing: border-box; }

body {
  margin: 0;
  height: 100vh;
  display: flex;
  flex-direction: column;
  overflow: hidden;
  background: #f6f5f4;
  color: #3d3d3d;
  font: 9px/12px "Noto Sans", sans-serif;
}

button, input {
  margin: 0;
  padding: 0;
  border: 0;
  background: none;
  color: inherit;
  font: inherit;
  min-width: 0;
}

svg { display: block; width: 16px; height: 16px; flex: none; }
.sprite { position: absolute; width: 0; height: 0; }

/* Menu bar */
.menubar {
  display: flex;
  justify-content: space-between;
  flex: none;
  height: 17px;
  padding: 0 6px 0 7px;
}
.menus {
  display: flex;
  flex: 1;
  gap: 11px;
  padding-top: 2px;
  border-bottom: 1px solid #e4e2e0;
}
.close { width: 10px; margin-left: 5px; color: #222; font-size: 13px; font-weight: 700; }

/* Toolbars */
.toolbar {
  display: flex;
  align-items: center;
  flex: none;
  height: 27px;
  padding-left: 2px;
}
.formatting { padding-left: 3px; }
.tool {
  display: grid;
  place-items: center;
  flex: none;
  width: 22px;
  height: 24px;
  border-radius: 3px;
}
.tool.on { background: #d6d2ce; }
.drop {
  display: grid;
  place-items: center;
  flex: none;
  width: 7px;
  height: 24px;
  padding-top: 2px;
  color: #222;
}
.drop svg { width: 5px; height: 3px; }
.drop:disabled { color: #b8b6b4; }
.sep { flex: none; width: 1px; height: 22px; margin: 0 3px 0 2px; background: #e6e4e2; }
.sep.tight { margin: 0 2px 0 1px; }

.combo {
  display: flex;
  flex: none;
  height: 24px;
  border: 1px solid #d2cecb;
  border-radius: 4px;
  background: #fff;
  color: #222;
  overflow: hidden;
}
.combo input { flex: 1; padding-left: 5px; }
.combo button {
  display: grid;
  place-items: center;
  width: 24px;
  border-left: 1px solid #e0dddb;
  background: #faf9f8;
}
.combo button svg, .expand svg { width: 8px; height: 4px; }
.font-name { width: 137px; margin-right: 6px; }
.font-name input { font-style: italic; }
.font-size { width: 67px; }

/* Workspace */
.workspace { display: flex; flex: 1; min-height: 0; }
.document { display: flex; flex-direction: column; flex: 1; min-width: 0; }

.formula {
  display: flex;
  align-items: center;
  flex: none;
  height: 29px;
  padding: 0 0 3px 3px;
  border-bottom: 1px solid #d0cecc;
}
.name-box { width: 107px; }
.mini { display: grid; place-items: center; flex: none; width: 16px; height: 24px; }
.mini svg { width: 14px; height: 14px; }
.formula .drop { width: 8px; }
.input-line {
  flex: 1;
  height: 17px;
  margin-left: 1px;
  padding-left: 4px;
  border: 1px solid #d2cecb;
  background: #fff;
}
.expand { display: grid; place-items: center; width: 15px; padding-right: 3px; color: #222; }

.view { display: flex; flex: 1; min-height: 0; }
.grid { flex: 1; min-width: 0; overflow: hidden; background: #fff; }

/* Sheet */
.sheet { width: 100%; table-layout: fixed; border-collapse: separate; border-spacing: 0; }
.c-num { width: 22px; }
.c-a { width: 143px; }
.c-b { width: 287px; }
.sheet tr { height: 18px; }
.sheet th {
  padding: 0;
  border: solid #bfbdbb;
  border-width: 0 1px 1px 0;
  background: #e1e0df;
  font-weight: 400;
  line-height: 12px;
}
.sheet thead tr { height: 14px; }
.sheet tbody th { padding-top: 2px; }
.sheet th.sel { background: #3584e4; border-color: #2f78d0; color: #fff; font-weight: 700; }
.sheet thead th.corner { background: #f0efee; }
.sheet td {
  padding: 0 0 2px 1px;
  border: solid #d3d3d3;
  border-width: 0 1px 1px 0;
  color: #111;
  font: 8px/12px Lato, sans-serif;
  white-space: nowrap;
}
.sheet td:nth-child(2) { font-weight: 700; }
.sheet .alt td { background: #f0fdfa; }
.sheet .title { height: 37px; }
.sheet .title td {
  position: relative;
  border: solid #3584e4;
  border-width: 0 1px 1px 0;
  color: #0f766e;
  font-size: 12px;
  line-height: 16px;
  text-align: center;
}
.sheet .section { height: 22px; }
.sheet .section td { background: #0f766e; color: #fff; font-size: 9px; padding-bottom: 1px; border-bottom-color: #0f766e; }
.sheet .gap { height: 6px; }
.sheet .gap th { padding: 0; font-size: 8px; line-height: 5px; }
.sheet .gap td { padding: 0; border-color: transparent; line-height: 5px; }
.handle {
  position: absolute;
  right: -2px;
  bottom: -2px;
  width: 4px;
  height: 4px;
  background: #3584e4;
}
.sheet u {
  text-decoration: underline wavy #e02b2b 1px;
  text-underline-offset: -1px;
  text-decoration-skip-ink: none;
}

/* Scroll bars */
.vscroll { width: 9px; padding: 5px 2px 0; background: #cecece; border-top: 2px solid #666; }
.vscroll .thumb { height: 39%; border-radius: 3px; background: #858585; }
.hscroll {
  display: flex;
  align-items: center;
  justify-content: space-between;
  flex: none;
  height: 10px;
  margin-right: 9px;
  padding: 0 2px;
  background: #cecece;
}
.hscroll .thumb { width: 47%; height: 6px; border-radius: 3px; background: #858585; }
.hscroll .splitter { width: 1px; height: 7px; background: #444; }

/* Sheet tabs */
.tabs { display: flex; align-items: stretch; flex: none; height: 16px; padding-left: 5px; font-size: 8px; }
.tab-nav { display: flex; align-items: center; width: 69px; }
.flip { transform: scaleX(-1); }
.add { width: 18px; }
.add svg { width: 14px; height: 14px; }
.tab { position: relative; padding: 0 10px 0 9px; }
.tab:not(.active)::after { content: ""; position: absolute; right: 0; top: 4px; width: 1px; height: 8px; background: #bbb; }
.tab.active { padding: 0 8px; border-bottom: 2px solid #8c8c8c; background: #fff; color: #222; font-weight: 700; }

/* Sidebar */
.sidebar {
  position: relative;
  display: flex;
  flex-direction: column;
  align-items: center;
  flex: none;
  gap: 13px;
  width: 39px;
  padding-top: 5px;
  border-left: 1px solid #cfcdcb;
}
.sidebar button:first-child { margin-bottom: 2px; }
.grip {
  position: absolute;
  left: -1px;
  top: 46%;
  display: grid;
  place-items: center;
  width: 5px;
  height: 50px;
  background: #949494;
}
.grip::after { content: ""; border: solid transparent; border-width: 2px 0 2px 3px; border-left-color: #fff; }

/* Status bar */
.status {
  display: grid;
  grid-template-columns: 177fr 221fr 209fr 167fr 45fr 31fr 20fr 20fr 182fr 96fr 32fr;
  align-items: center;
  flex: none;
  height: 17px;
  border-top: 1px solid #d5d3d1;
  font-size: 8px;
}
.status > div { min-width: 0; height: 12px; padding-left: 6px; border-right: 1px solid #dddbd9; white-space: nowrap; }
.status > div:last-child { border-right: 0; padding-left: 4px; }
.status .mid { padding: 0; text-align: center; }
.status .sheet-no { display: flex; align-items: center; gap: 8px; padding-left: 4px; }
.sheet-no svg { width: 15px; height: 15px; }
.status .mode svg { width: 20px; height: 12px; }
.status .zoom { display: flex; align-items: center; gap: 3px; padding: 0 4px; }
.zoom button { width: 9px; flex: none; color: #222; font-size: 13px; font-weight: 700; }
.zoom input { flex: 1; width: 0; height: 10px; appearance: none; background: linear-gradient(#999, #999) center / 100% 1px no-repeat; }
.zoom input::-webkit-slider-thumb { appearance: none; width: 3px; height: 7px; border: 1px solid #555; background: #eee; }
```
